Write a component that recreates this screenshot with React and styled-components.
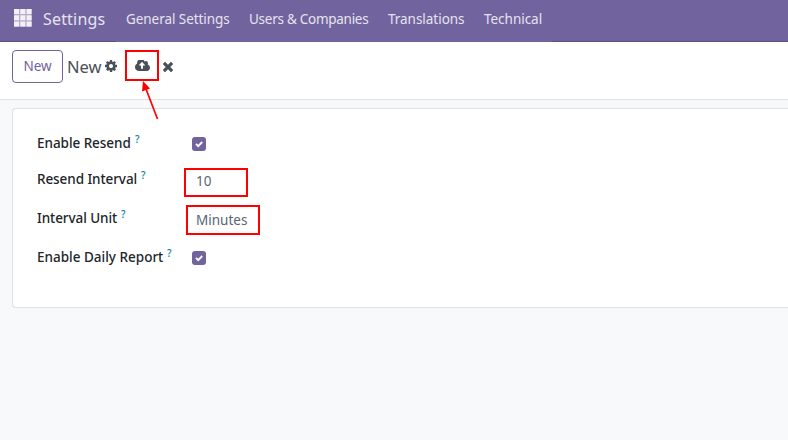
import React from "react";
import styled, { createGlobalStyle } from "styled-components";

const Global = createGlobalStyle`
  * { box-sizing: border-box; }
  body {
    margin: 0;
    background: #f8f9fa;
    font-family: "Noto Sans", "Open Sans", sans-serif;
    font-size: 13.5px;
    color: #374151;
    overflow: hidden;
  }
`;

const Page = styled.div`
  display: flex;
  flex-direction: column;
  height: 440px;
  width: 100%;
  background: #f8f9fa;
`;

const Text = styled.span`
  display: block;
  flex: none;
  width: ${(p) => p.$w}px;
  letter-spacing: ${(p) => p.$track || 0}px;
  white-space: nowrap;
`;

const Navbar = styled.nav`
  display: flex;
  align-items: center;
  height: 42px;
  padding: 0 0 4px 14px;
  background:
    linear-gradient(#5a4f7f, #5a4f7f) 0 100% / 116px 1px no-repeat,
    linear-gradient(#5a4f7f, #5a4f7f) 552px 100% / 100% 1px no-repeat,
    #71639e;
  color: #e6e3ee;
`;

const AppsIcon = styled.svg`
  flex: none;
  width: 18px;
  height: 18px;
  margin-right: 11px;
  margin-top: -2px;
`;

const Brand = styled(Text)`
  font-size: 16px;
  margin-right: 21px;
`;

const Menu = styled.div`
  display: flex;
  gap: 20px;
`;

const ControlPanel = styled.header`
  position: relative;
  display: flex;
  align-items: flex-start;
  height: 58px;
  padding: 8px 0 0 12px;
  background: #fff;
  border-bottom: 1px solid #dee2e6;
`;

const NewButton = styled.button`
  display: flex;
  justify-content: center;
  width: 51px;
  height: 33px;
  padding: 6px 0 0;
  border: 1px solid #71639e;
  border-radius: 4px;
  background: #fff;
  color: #71639e;
  font: inherit;
  line-height: 19px;
`;

const Title = styled(Text)`
  margin: 5px 4px 0 4px;
  font-size: 16.5px;
  line-height: 24px;
  color: #495057;
`;

const Icon = styled.svg`
  display: block;
  flex: none;
  width: ${(p) => p.$w}px;
  height: ${(p) => p.$h}px;
  margin-top: ${(p) => p.$top || 0}px;
  fill: #495057;
`;

const SaveButton = styled.div`
  display: flex;
  justify-content: center;
  width: 34px;
  height: 31px;
  margin: 0 4px 0 8px;
  padding: 6px 0 0 1px;
  border: 2px solid #ff0000;
`;

const Arrow = styled.svg`
  position: absolute;
  left: 136px;
  top: 38px;
  width: 28px;
  height: 42px;
  z-index: 1;
`;

const Sheet = styled.main`
  height: 200px;
  margin: 8px 0 0 12px;
  padding: 16px 0 0 24px;
  background: #fff;
  border: 1px solid #dee2e6;
  border-right: 0;
  border-radius: 4px 0 0 4px;
`;

const Row = styled.div`
  display: grid;
  grid-template-columns: 147px 1fr;
  height: 38px;
`;

const Label = styled.label`
  display: flex;
  gap: 4px;
  padding-top: ${(p) => p.$top}px;
  line-height: 20px;
  font-weight: 500;
  color: #212529;
`;

const Help = styled.sup`
  font-size: 10px;
  line-height: 12px;
  font-weight: 500;
  color: #017e9a;
`;

const Check = styled.svg`
  display: block;
  width: 14px;
  height: 14px;
  margin: 12px 0 0 8px;
`;

const Field = styled.div`
  width: ${(p) => p.$w}px;
  height: ${(p) => p.$h}px;
  margin: ${(p) => p.$m};
  padding-left: ${(p) => p.$pad}px;
  border: 2px solid #ff0000;
  line-height: ${(p) => p.$line}px;
  color: #5b6470;
`;

const COG =
  "M1152 896q0-106-75-181t-181-75-181 75-75 181 75 181 181 75 181-75 75-181zm512-109v222q0 12-8 23t-20 13l-185 28q-19 54-39 91 35 50 107 138 10 12 10 25t-9 23q-27 37-99 108t-94 71q-12 0-26-9l-138-108q-44 23-91 38-16 136-29 186-7 28-36 28h-222q-14 0-24.5-8.5t-11.5-21.5l-28-184q-49-16-90-37l-141 107q-10 9-25 9-14 0-25-11-126-114-165-168-7-10-7-23 0-12 8-23 15-21 51-66.5t54-70.5q-27-50-41-99l-183-27q-13-2-21-12.5t-8-23.5v-222q0-12 8-23t19-13l186-28q14-46 39-92-40-57-107-138-10-12-10-24 0-10 9-23 26-36 98.5-107.5t94.5-71.5q13 0 26 10l138 107q44-23 91-38 16-136 29-186 7-28 36-28h222q14 0 24.5 8.5t11.5 21.5l28 184q49 16 90 37l142-107q9-9 24-9 13 0 25 10 129 119 165 170 7 8 7 22 0 12-8 23-15 21-51 66.5t-54 70.5q26 50 41 98l183 28q13 2 21 12.5t8 23.5z";
const CLOUD =
  "M1216 864q0-14-9-23l-352-352q-9-9-23-9t-23 9l-351 351q-10 12-10 24 0 14 9 23t23 9h224v352q0 13 9.5 22.5t22.5 9.5h192q13 0 22.5-9.5t9.5-22.5v-352h224q13 0 22.5-9.5t9.5-22.5zm640 288q0 159-112.5 271.5t-271.5 112.5h-1088q-185 0-316.5-131.5t-131.5-316.5q0-130 70-240t188-165q-2-30-2-43 0-212 150-362t362-150q156 0 285.5 87t188.5 231q71-62 166-62 106 0 181 75t75 181q0 76-41 138 130 31 213.5 135.5t83.5 238.5z";
const TIMES =
  "M1490 1322q0 40-28 68l-136 136q-28 28-68 28t-68-28l-294-294-294 294q-28 28-68 28t-68-28l-136-136q-28-28-28-68t28-68l294-294-294-294q-28-28-28-68t28-68l136-136q28-28 68-28t68 28l294 294 294-294q28-28 68-28t68 28l136 136q28 28 28 68t-28 68l-294 294 294 294q28 28 28 68z";

const MENU = [
  ["General Settings", 103, -0.06],
  ["Users & Companies", 119, -0.27],
  ["Translations", 76, -0.03],
  ["Technical", 60, -0.03],
];

function Checkbox() {
  return (
    <Check viewBox="0 0 14 14">
      <rect width="14" height="14" rx="3" fill="#71639e" />
      <path d="M4 6.9 6.2 9.1 10.2 5" fill="none" stroke="#fff" strokeWidth="1.9" />
    </Check>
  );
}

function FieldLabel({ text, w, track, top }) {
  return (
    <Label $top={top}>
      <Text $w={w} $track={track}>{text}</Text>
      <Help>?</Help>
    </Label>
  );
}

export default function App() {
  return (
    <Page>
      <Global />
      <Navbar>
        <AppsIcon viewBox="0 0 18 18">
          <rect width="17.6" height="17.6" fill="#b5adcb" />
          {[0, 6.3, 12.6].map((y) =>
            [0, 6.3, 12.6].map((x) => (
              <rect key={`${x}-${y}`} x={x} y={y} width="5" height="5" fill="#f3f1f7" />
            ))
          )}
        </AppsIcon>
        <Brand $w={62} $track={0.18}>Settings</Brand>
        <Menu>
          {MENU.map(([name, w, track]) => (
            <Text key={name} $w={w} $track={track}>{name}</Text>
          ))}
        </Menu>
      </Navbar>
      <ControlPanel>
        <NewButton>New</NewButton>
        <Title $w={34}>New</Title>
        <Icon $w={12} $h={12} $top={10} viewBox="128 128 1536 1536"><path d={COG} /></Icon>
        <SaveButton>
          <Icon $w={15} $h={11} $top={2} viewBox="-64 256 1920 1280" preserveAspectRatio="none"><path d={CLOUD} /></Icon>
        </SaveButton>
        <Icon $w={10} $h={10} $top={12} viewBox="302 366 1188 1188"><path d={TIMES} /></Icon>
        <Arrow viewBox="0 0 28 42">
          <path d="M21.5 39 10 9" stroke="#ff0000" strokeWidth="1.7" fill="none" />
          <path d="M7 1 14 8.5 6 11.5z" fill="#ff0000" />
        </Arrow>
      </ControlPanel>
      <Sheet>
        <Row>
          <FieldLabel text="Enable Resend" w={94} top={8} track={-0.05} />
          <Checkbox />
        </Row>
        <Row>
          <FieldLabel text="Resend Interval" w={100} top={6} track={-0.08} />
          <Field $w={64} $h={29} $m="5px 0 0 0" $pad={10} $line={22}>10</Field>
        </Row>
        <Row>
          <FieldLabel text="Interval Unit" w={80} top={7} track={-0.08} />
          <Field $w={74} $h={30} $m="4px 0 0 2px" $pad={8} $line={27}>Minutes</Field>
        </Row>
        <Row>
          <FieldLabel text="Enable Daily Report" w={126} top={8} />
          <Checkbox />
        </Row>
      </Sheet>
    </Page>
  );
}
